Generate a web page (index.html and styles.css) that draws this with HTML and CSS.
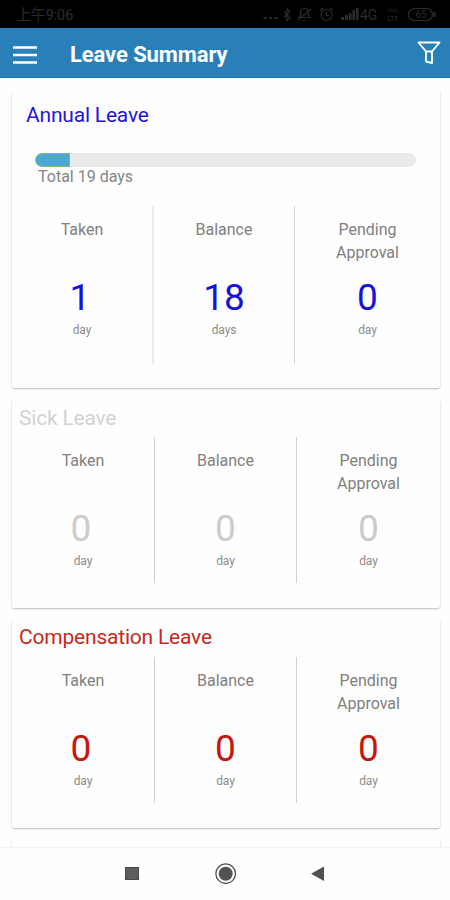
FILE: index.html
```html
<!DOCTYPE html>
<html lang="en">
<head>
<meta charset="utf-8">
<title>Leave Summary</title>
<link rel="stylesheet" href="styles.css">
</head>
<body>
<div class="screen">
  <div class="status">
    <span class="clock">上午9:06</span>
    <svg class="status-icons" width="176" height="28" viewBox="0 0 176 28" fill="none" stroke="currentColor" stroke-width="1.2">
      <g fill="currentColor" stroke="none"><rect x="0.500" y="17" width="3" height="2"/><rect x="6" y="17" width="3" height="2"/><rect x="11.500" y="17" width="3" height="2"/></g>
      <path d="M21 11.500l6 6-3 3v-12l3 3-6 6"/>
      <path d="M36 17.500h11l-1.500-2v-3c0-3-2-4-4-4s-4 1-4 4v3zM40 20h3M48 9l-13 11"/>
      <circle cx="63.500" cy="15" r="5.500"/><path d="M63.500 11.500v4h3M57 10.500l3-2.500M70 10.500l-3-2.500"/>
      <g fill="currentColor" stroke="none"><rect x="78" y="17" width="3" height="3"/><rect x="82" y="15" width="3" height="5"/><rect x="86" y="13" width="2.500" height="7"/><rect x="89.500" y="10" width="2.500" height="10"/><rect x="93" y="8" width="2.500" height="12"/></g>
      <rect x="145.500" y="8.500" width="24" height="12" rx="6"/>
      <rect x="171" y="12.500" width="1" height="4"/>
      <g class="status-text"><text x="97" y="20" font-size="14">4G</text><text x="124.500" y="11.500" font-size="5.500">Vo))</text><text x="124.500" y="20.500" font-size="7">LTE</text><text x="152.500" y="18" font-size="10">65</text></g>
    </svg>
  </div>
  <header class="bar">
    <svg class="menu" width="24" height="18" viewBox="0 0 24 18"><path d="M0 1.500h24M0 9h24M0 16.500h24" stroke="#fff" stroke-width="2.400"/></svg>
    <h1>Leave Summary</h1>
    <svg class="filter" width="24" height="26" viewBox="0 0 24 26" fill="none" stroke="#fff" stroke-width="1.900" stroke-linejoin="round"><path d="M1.500 2.500h21l-7.500 9v11.500l-6-1.500v-10zM9 11.500h6"/></svg>
  </header>
  <main>
    <section class="card annual">
      <h2>Annual Leave</h2>
      <div class="track"><div class="fill"></div></div>
      <p class="total">Total 19 days</p>
      <div class="stats">
        <div class="stat"><span class="label">Taken</span><b class="shift">1</b><small>day</small></div>
        <div class="stat"><span class="label">Balance</span><b>18</b><small>days</small></div>
        <div class="stat"><span class="label">Pending<br>Approval</span><b>0</b><small>day</small></div>
      </div>
    </section>
    <section class="card sick">
      <h2>Sick Leave</h2>
      <div class="stats">
        <div class="stat"><span class="label">Taken</span><b class="shift">0</b><small>day</small></div>
        <div class="stat"><span class="label">Balance</span><b>0</b><small>day</small></div>
        <div class="stat"><span class="label">Pending<br>Approval</span><b>0</b><small>day</small></div>
      </div>
    </section>
    <section class="card comp">
      <h2>Compensation Leave</h2>
      <div class="stats">
        <div class="stat"><span class="label">Taken</span><b class="shift">0</b><small>day</small></div>
        <div class="stat"><span class="label">Balance</span><b>0</b><small>day</small></div>
        <div class="stat"><span class="label">Pending<br>Approval</span><b>0</b><small>day</small></div>
      </div>
    </section>
    <section class="card next"></section>
  </main>
  <nav>
    <svg width="450" height="53" viewBox="0 0 450 53"><rect x="125.500" y="19.500" width="13" height="12" fill="#5e5e5e" stroke="#484848"/><circle cx="225.700" cy="25.700" r="9.800" fill="none" stroke="#555" stroke-width="1.300"/><circle cx="225.700" cy="25.700" r="7" fill="#525252"/><path d="M311 25.700L324 18.500V33z" fill="#505050"/></svg>
  </nav>
</div>
</body>
</html>
```
FILE: styles.css
```css
* { box-sizing: border-box; }
body { margin: 0; background: #fefefe; font-family: Roboto, "Noto Sans CJK SC", sans-serif; }
h1, h2, p { margin: 0; }
svg { display: block; flex: none; }
.screen { width: 450px; height: 900px; overflow: hidden; display: flex; flex-direction: column; }
.status { height: 28px; flex: none; background: #000; color: #2b2b2b; display: flex; justify-content: space-between; padding: 0 11px 0 16px; }
.clock { font-size: 15px; line-height: 30px; letter-spacing: -0.3px; }
.status-text { fill: currentColor; stroke: none; }
.bar { height: 50px; flex: none; background: #2980b9; border-bottom: 1px solid #1d73ac; display: flex; align-items: center; padding: 0 9px 0 13px; }
.menu { margin-top: 4px; }
.bar h1 { margin: 4px 0 0 33px; flex: 1; color: #fff; font-size: 22px; line-height: 30px; font-weight: 700; letter-spacing: -.1px; }
main { flex: 1; min-height: 0; overflow: hidden; padding: 12px 10px 0 12px; }
.card { background: #fefefe; border-radius: 2px; box-shadow: 0 1px 2px rgba(0,0,0,.27); margin-bottom: 11px; }
.card h2 { font-size: 21px; line-height: 24px; font-weight: 400; letter-spacing: -.2px; }
.annual { height: 298px; padding-top: 13px; margin-bottom: 12px; }
.annual h2 { padding-left: 14px; color: #2315df; }
.track { margin: 26px 24px 0 23px; height: 14px; border-radius: 7px; background: #eaeaea; overflow: hidden; }
.fill { width: 35px; height: 14px; background: #4ba8d0; border: 1px solid #83bd75; border-radius: 7px 0 0 7px; }
.total { margin-left: 26px; font-size: 16px; line-height: 20px; color: #858585; }
.stats { display: grid; grid-template-columns: 143px 142px 143px; height: 146px; }
.stat { display: flex; flex-direction: column; align-items: center; border-right: 1px solid #d2d2d2; }
.stat:last-child { border-right: 0; }
.label { height: 61px; margin-top: 12px; font-size: 16px; line-height: 23px; text-align: center; color: #808080; }
.stat b { font-weight: 400; font-size: 37px; line-height: 38px; }
.stat .shift { margin-right: 4px; }
.stat small { font-size: 12px; line-height: 16px; margin-top: 5px; letter-spacing: -.1px; color: #8c8c8c; }
.annual .stats { grid-template-columns: 142px 141px 145px; height: 158px; margin-top: 19px; }
.annual .stat:first-child { border-right: 2px solid #ececec; }
.annual b { color: #1512df; }
.sick, .comp { height: 208px; padding-top: 6px; }
.sick h2, .comp h2 { padding-left: 7px; }
.sick .stats { margin-top: 7px; }
.sick h2 { color: #d2d2d2; }
.sick b { color: #cbcbcb; }
.comp { height: 209px; }
.comp .stats { margin-top: 8px; }
.comp h2 { color: #c32a20; }
.comp b { color: #c8170c; }
.next { height: 100px; }
nav { height: 53px; flex: none; background: #fefefe; border-top: 1px solid #f2f2f2; }
```
